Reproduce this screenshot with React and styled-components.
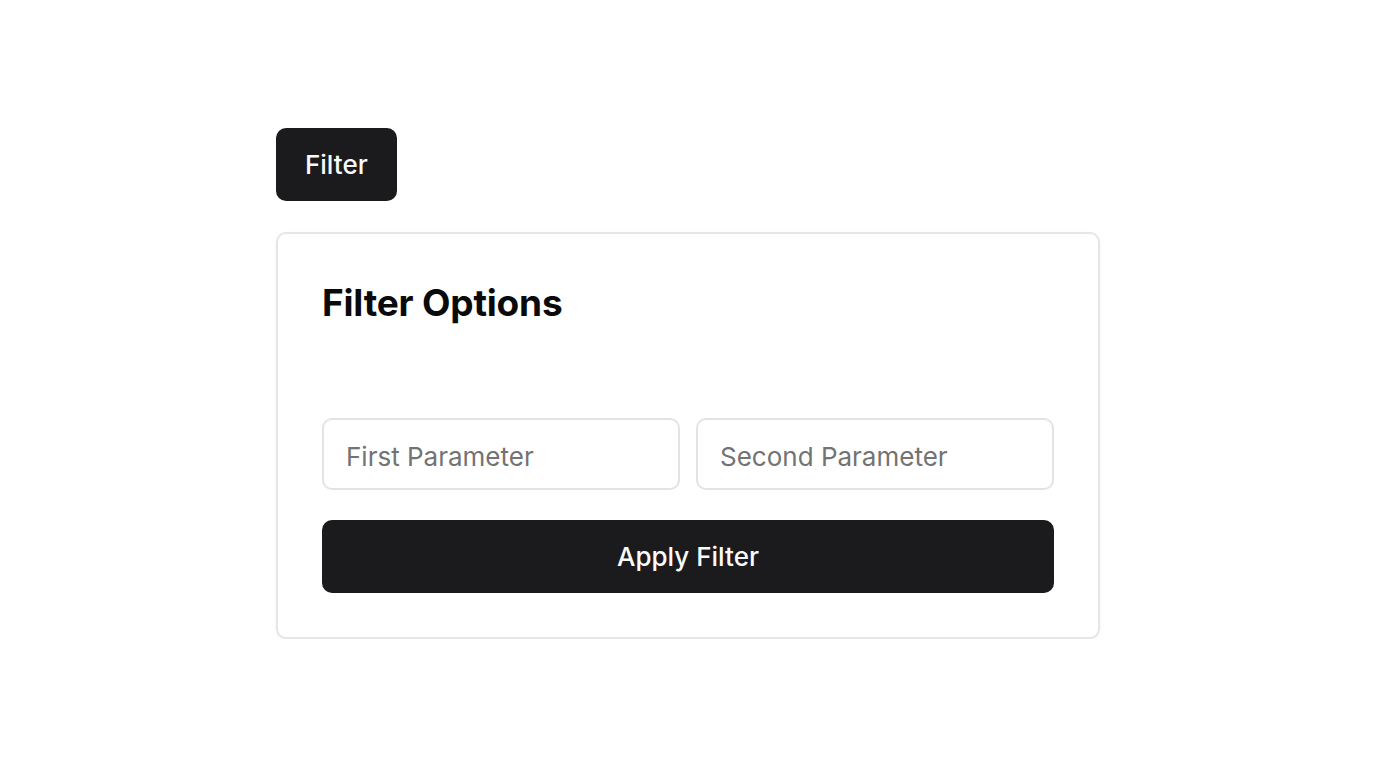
import React from "react";
import styled, { createGlobalStyle } from "styled-components";

const Global = createGlobalStyle`
  html, body { margin: 0; padding: 0; background: #ffffff; }
  body { font-family: Inter, "Noto Sans", sans-serif; color: #0a0a0a; }
  * { box-sizing: border-box; }
`;

const Page = styled.div`
  width: 824px;
  margin: 0 auto;
  padding-top: 128px;
  display: flex;
  flex-direction: column;
  align-items: flex-start;
  gap: 31px;
`;

const DarkButton = styled.button`
  font-family: Inter, "Noto Sans", sans-serif;
  font-size: 26px;
  font-weight: 500;
  line-height: 32px;
  color: #fafafa;
  background: #1b1b1d;
  border: none;
  border-radius: 10px;
  padding: ${(p) => (p.$wide ? "0" : "0 29px")};
  height: 73px;
  width: ${(p) => (p.$wide ? "100%" : "auto")};
  display: flex;
  align-items: center;
  justify-content: center;
  cursor: pointer;
`;

const Card = styled.section`
  width: 100%;
  border: 2px solid #e6e6e6;
  border-radius: 10px;
  padding: 44px;
  box-shadow: 0 1px 3px rgba(0, 0, 0, 0.06);
  display: flex;
  flex-direction: column;
`;

const Title = styled.h2`
  margin: 0 0 90px;
  font-size: 37px;
  font-weight: 700;
  line-height: 50px;
  letter-spacing: -0.2px;
  color: #0a0a0a;
`;

const Row = styled.div`
  display: grid;
  grid-template-columns: 1fr 1fr;
  gap: 16px;
  margin-bottom: 30px;
`;

const Input = styled.input`
  height: 72px;
  width: 100%;
  border: 2px solid #e3e3e3;
  border-radius: 10px;
  padding: 4px 22px 0;
  font-family: Inter, "Noto Sans", sans-serif;
  font-size: 26px;
  color: #0a0a0a;
  outline: none;
  &::placeholder { color: #737373; }
`;

export default function App() {
  return (
    <>
      <Global />
      <Page>
        <DarkButton>Filter</DarkButton>
        <Card>
          <Title>Filter Options</Title>
          <Row>
            <Input placeholder="First Parameter" />
            <Input placeholder="Second Parameter" />
          </Row>
          <DarkButton $wide>Apply Filter</DarkButton>
        </Card>
      </Page>
    </>
  );
}
